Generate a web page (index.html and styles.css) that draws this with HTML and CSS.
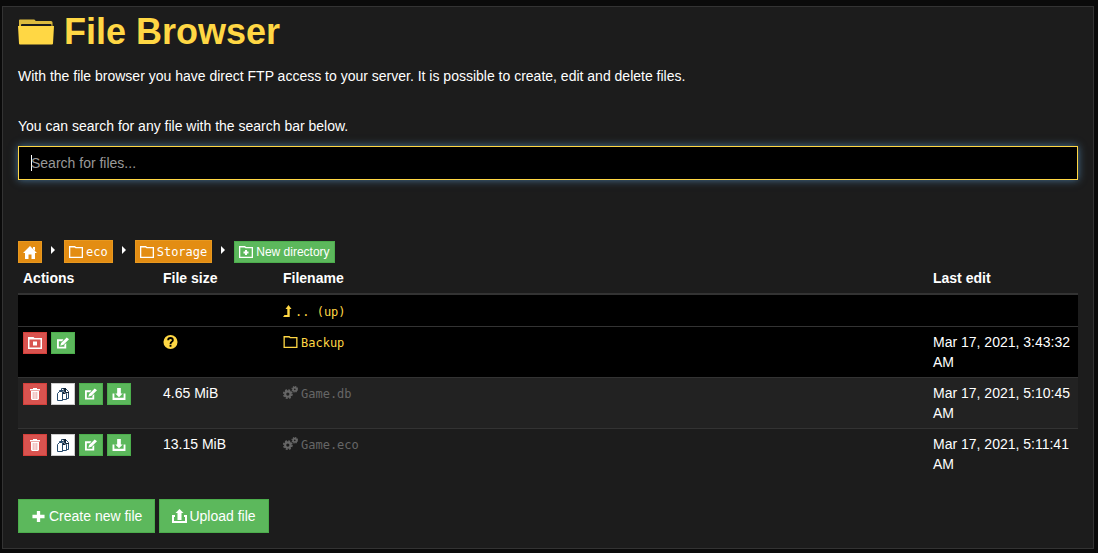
FILE: index.html
```html
<!DOCTYPE html>
<html lang="en">
<head>
<meta charset="utf-8">
<meta name="viewport" content="width=device-width, initial-scale=1">
<title>File Browser</title>
<link rel="stylesheet" href="styles.css">
</head>
<body>
<svg class="sprite" aria-hidden="true">
  <symbol id="folder-solid" viewBox="0 0 36 26"><path d="M1 5V1.500Q1 .5 2 .5H16Q17.500 .5 17.500 2H33Q34.500 2 34.500 3.500V7H33.500V6Q33.500 5 32.500 5H4Q3 5 3 6V7H1Z" opacity=".85"/><path d="M0 7H36L35 24.500Q35 25.500 34 25.500H2Q1 25.500 1 24.500Z"/></symbol>
  <symbol id="folder" viewBox="0 0 14 12"><path fill-rule="evenodd" d="M0 0H6L7 1H14V12H0ZM1.300 2V10.700H12.700V2.300H6.500L5.500 1.500H1.300Z"/></symbol>
  <symbol id="folder-plus" viewBox="0 0 14 12"><path fill-rule="evenodd" d="M0 0H6L7 1H14V12H0ZM1.300 2V10.700H12.700V2.300H6.500L5.500 1.500H1.300Z"/><path d="M6 4H8V5.500H9.500V7.500H8V9H6V7.500H4.500V5.500H6Z"/></symbol>
  <symbol id="folder-x" viewBox="0 0 14 12"><path fill-rule="evenodd" d="M0 0H5.500L6.500 1H14V12H0ZM1.500 2.500V10.500H12.500V2.500Z"/><path d="M5 4.500H9V8.500H5Z"/></symbol>
  <symbol id="home" viewBox="0 0 14 13"><path d="M7 0 14 7H12V13H8.500V8.500H5.500V13H2V7H0Z"/><path d="M10 1H12V5L10 3Z"/></symbol>
  <symbol id="edit" viewBox="0 0 13 12"><path fill-rule="evenodd" d="M0 2H7L5.500 4H2V10H8V8L10 6V12H0Z"/><path d="M3.500 9 4.500 6 10.500 0 13 2 7 8Z"/></symbol>
  <symbol id="trash" viewBox="0 0 10 12"><path d="M3 0H7V1H10V2.500H0V1H3ZM1 3H9V11L8 12H2L1 11Z"/><path fill="none" stroke="#d9534f" stroke-width=".5" d="M3.200 4V11M5 4V11M6.800 4V11"/></symbol>
  <symbol id="copy" viewBox="0 0 12 13"><path fill="#fff" stroke="#24496b" d="M4.500 .5H8.500L11.500 3.500V10.500H4.500Z"/><path d="M6 0H9V4H12V5H8Z"/><path fill="#fff" stroke="#24496b" d="M2.500 2.500H6.500L9.500 5.500V11.500H2.500Z"/><path d="M6 3V6H9Z"/><path fill="#fff" stroke="#24496b" d="M.5 5.500 2.500 3.500H5.500V12.500H.5Z"/></symbol>
  <symbol id="download" viewBox="0 0 14 13"><path d="M5 0H9V6H11L7 10 3 6H5Z"/><path d="M0 6H2V10.500H12V6H14V13H0Z"/></symbol>
  <symbol id="upload" viewBox="0 0 15 14"><path d="M7.500 0 11.500 4H9.500V11H5.500V4H3.500Z"/><path d="M0 6H3V8H2V12H13V8H12V6H15V14H0Z"/></symbol>
  <symbol id="plus" viewBox="0 0 11 10"><path d="M4 0H7V3.500H11V6.500H7V10H4V6.500H0V3.500H4Z"/></symbol>
  <symbol id="level-up" viewBox="0 0 9 12"><path d="M5.500 0 8.500 4H6.700V12H0L1.500 10H4.300V4H2.500Z"/></symbol>
  <symbol id="caret" viewBox="0 0 4 8"><path d="M0 0 4 4 0 8Z"/></symbol>
  <symbol id="question" viewBox="0 0 16 16"><circle cx="8" cy="8" r="7.500"/><path fill="none" stroke="#000" stroke-width="2" d="M5.500 6C5.500 3 10.500 3 10.500 6 10.500 8 8 7.500 8 10M8 11V13"/></symbol>
  <symbol id="cogs" viewBox="0 0 14 12"><g fill="none" stroke="currentColor"><circle cx="4.500" cy="7.500" r="2.500" stroke-width="2"/><circle cx="4.500" cy="7.500" r="3.900" stroke-width="1.400" stroke-dasharray="1.800 1.263"/><circle cx="11" cy="3" r="1.600" stroke-width="1.600"/><circle cx="11" cy="3" r="2.600" stroke-width="1" stroke-dasharray="1.200 .842"/></g></symbol>
</svg>
<main class="panel">
  <h1 class="title"><svg class="i-title"><use href="#folder-solid"/></svg>File Browser</h1>
  <p class="intro">With the file browser you have direct FTP access to your server. It is possible to create, edit and delete files.</p>
  <label class="search-label" for="search">You can search for any file with the search bar below.</label>
  <input class="search" id="search" type="text" placeholder="Search for files..." autofocus>
  <nav class="crumbs" aria-label="Directory">
    <a class="btn small orange" href="#" aria-label="Home"><svg class="i-home"><use href="#home"/></svg></a>
    <svg class="i-caret"><use href="#caret"/></svg>
    <a class="btn small orange mono path" href="#"><svg class="i-wide"><use href="#folder"/></svg>eco</a>
    <svg class="i-caret"><use href="#caret"/></svg>
    <a class="btn small orange mono path" href="#"><svg class="i-wide"><use href="#folder"/></svg>Storage</a>
    <svg class="i-caret"><use href="#caret"/></svg>
    <button class="btn small green" type="button"><svg class="i-wide"><use href="#folder-plus"/></svg>New directory</button>
  </nav>
  <table class="files">
    <thead><tr><th class="c-actions">Actions</th><th class="c-size">File size</th><th>Filename</th><th class="c-date">Last edit</th></tr></thead>
    <tbody>
      <tr class="dir"><td></td><td></td><td><a class="name mono" href="#"><svg class="i-up"><use href="#level-up"/></svg>.. (up)</a></td><td></td></tr>
      <tr class="dir">
        <td><div class="actions"><button class="btn small red" type="button" aria-label="Delete directory"><svg class="i-wide"><use href="#folder-x"/></svg></button><button class="btn small green" type="button" aria-label="Rename"><svg class="i-sq"><use href="#edit"/></svg></button></div></td>
        <td><svg class="i-question"><use href="#question"/></svg></td>
        <td><a class="name mono" href="#"><svg class="i-dir"><use href="#folder"/></svg>Backup</a></td>
        <td>Mar 17, 2021, 3:43:32 AM</td>
      </tr>
      <tr class="odd">
        <td><div class="actions"><button class="btn small red" type="button" aria-label="Delete"><svg class="i-sq"><use href="#trash"/></svg></button><button class="btn small white" type="button" aria-label="Copy"><svg class="i-copy"><use href="#copy"/></svg></button><button class="btn small green" type="button" aria-label="Rename"><svg class="i-sq"><use href="#edit"/></svg></button><button class="btn small green" type="button" aria-label="Download"><svg class="i-wide"><use href="#download"/></svg></button></div></td>
        <td>4.65 MiB</td>
        <td><span class="name mono muted"><svg class="i-cogs"><use href="#cogs"/></svg>Game.db</span></td>
        <td>Mar 17, 2021, 5:10:45 AM</td>
      </tr>
      <tr>
        <td><div class="actions"><button class="btn small red" type="button" aria-label="Delete"><svg class="i-sq"><use href="#trash"/></svg></button><button class="btn small white" type="button" aria-label="Copy"><svg class="i-copy"><use href="#copy"/></svg></button><button class="btn small green" type="button" aria-label="Rename"><svg class="i-sq"><use href="#edit"/></svg></button><button class="btn small green" type="button" aria-label="Download"><svg class="i-wide"><use href="#download"/></svg></button></div></td>
        <td>13.15 MiB</td>
        <td><span class="name mono muted"><svg class="i-cogs"><use href="#cogs"/></svg>Game.eco</span></td>
        <td>Mar 17, 2021, 5:11:41 AM</td>
      </tr>
    </tbody>
  </table>
  <div class="footer">
    <button class="btn large green" type="button"><svg class="i-plus"><use href="#plus"/></svg>Create new file</button>
    <button class="btn large green upload" type="button"><svg class="i-upload"><use href="#upload"/></svg>Upload file</button>
  </div>
</main>
</body>
</html>
```
FILE: styles.css
```css
* { box-sizing: border-box; }
body {
  margin: 6px 4px 4px 2px;
  background: #0a0a0a;
  color: #fff;
  font: 14px/20px "Liberation Sans", Arial, sans-serif;
}
svg { display: block; flex: none; fill: currentColor; }
.sprite { position: absolute; width: 0; height: 0; }
.panel { padding: 5px 15px 15px; border: 1px solid #333; background: #1c1c1c; }
.title {
  display: flex;
  align-items: center;
  gap: 10px;
  margin: 0 0 14px;
  color: #ffd744;
  font-size: 36px;
  line-height: 40px;
}
.intro { margin: 0 0 30px; }
.search-label { display: block; margin-bottom: 10px; }
.search {
  display: block;
  width: 100%;
  height: 34px;
  padding: 6px 12px;
  border: 1px solid #ffd744;
  border-radius: 0;
  outline: 0;
  background: #000;
  color: #fff;
  font: inherit;
  box-shadow: 0 0 8px rgba(102, 175, 233, .6);
}
.search::placeholder { color: #999; opacity: 1; }
/* steady, non-blinking caret while the focused field is empty */
.search:focus:placeholder-shown {
  caret-color: transparent;
  background: linear-gradient(#fff, #fff) 12px center / 1px 16px no-repeat #000;
}
.crumbs { display: flex; align-items: flex-end; gap: 9px; margin-top: 60px; }
.btn {
  display: inline-flex;
  align-items: center;
  justify-content: center;
  border: 1px solid;
  color: #fff;
  font-family: inherit;
  text-decoration: none;
  white-space: nowrap;
  cursor: pointer;
}
.small { min-width: 24px; height: 22px; padding: 0 4px; gap: 3px; font-size: 12px; line-height: 18px; }
.path { height: 23px; }
.large { height: 34px; padding: 0 12px; gap: 3px; font-size: 14px; line-height: 20px; }
.upload { gap: 2px; }
.orange { background: #e38d13; border-color: #e8981e; }
.green { background: #5cb85c; border-color: #4cae4c; }
.red { background: #d9534f; border-color: #d43f3a; }
.white { background: #fff; border-color: #ccc; color: #123; }
.mono { font-family: "DejaVu Sans Mono", monospace; font-size: 12px; }
.files { width: 100%; table-layout: fixed; border-spacing: 0; }
.files th, .files td { padding: 5px; text-align: left; vertical-align: top; }
.files th { border-bottom: 2px solid #333; }
.files td { height: 31px; border-top: 1px solid #333; }
.files tbody tr:first-child td { border-top-color: #000; }
.c-actions { width: 140px; }
.c-size { width: 120px; }
.c-date { width: 150px; }
.dir { background: #000; }
.odd { background: #222; }
.actions { display: flex; gap: 4px; height: 22px; }
.name { display: flex; align-items: flex-start; gap: 3px; height: 20px; color: #ffd744; text-decoration: none; line-height: 22px; }
.muted { color: #666; }
.footer { display: flex; gap: 4px; margin-top: 20px; }
.i-title { width: 36px; height: 26px; }
.i-sq { width: 12px; height: 12px; }
.i-copy, .i-home { width: 14px; height: 13px; }
.i-wide { width: 14px; height: 12px; }
.i-caret { width: 4px; height: 8px; margin: 0 0 9px; }
.i-up { width: 9px; height: 12px; margin-top: 4px; }
.i-dir { width: 15px; height: 12px; margin-top: 4px; }
.i-cogs { width: 15px; height: 13px; margin-top: 3px; }
.i-question { width: 15px; height: 16px; margin-top: 2px; color: #ffd744; }
.i-plus { width: 15px; height: 11px; }
.i-upload { width: 15px; height: 14px; }
```
